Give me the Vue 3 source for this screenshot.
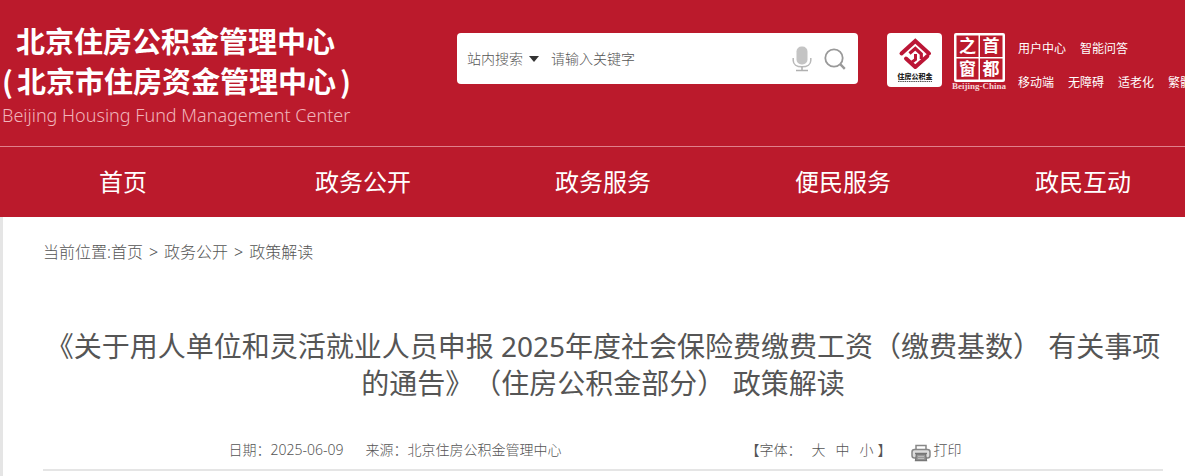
<script setup>
import { ref } from 'vue'

const keyword = ref('')
const scope = ref('站内搜索')
const topLinks = [
  ['用户中心', '智能问答'],
  ['移动端', '无障碍', '适老化', '繁體版'],
]
const navItems = ['首页', '政务公开', '政务服务', '便民服务', '政民互动']
const crumbs = ['首页', '政务公开', '政策解读']
const sizes = ['大', '中', '小']
</script>

<template>
  <div class="page">
    <header class="header">
      <div class="top">
        <a href="#" class="brand">
          <span class="brand-cn">北京住房公积金管理中心</span>
          <span class="brand-cn alias"><span>(</span><span>北京市住房资金管理中心</span><span>)</span></span>
          <span class="brand-en">Beijing Housing Fund Management Center</span>
        </a>

        <form class="search" @submit.prevent>
          <label class="scope">
            <select v-model="scope" aria-label="搜索范围">
              <option>站内搜索</option>
            </select>
            <svg class="caret" width="10" height="6" viewBox="0 0 10 6"><path d="M0 0h10L5 6z" fill="#333" /></svg>
          </label>
          <input v-model="keyword" type="text" placeholder="请输入关键字" aria-label="关键字" />
          <button type="button" aria-label="语音输入">
            <svg width="20" height="26" viewBox="0 0 20 26">
              <rect x="4.5" y="0.5" width="11" height="18" rx="5" fill="#c4c4c4" />
              <path d="M1.2 12v2.5c0 3.800 3.400 6.300 8.800 6.300s8.800-2.500 8.800-6.300V12" fill="none" stroke="#b9b9b9" stroke-width="1.500" />
              <path d="M10 20.500v3.500M4 24.500h12" fill="none" stroke="#b0b0b0" stroke-width="1.500" />
            </svg>
          </button>
          <button type="submit" aria-label="搜索">
            <svg width="22" height="22" viewBox="0 0 22 22" fill="none" stroke="#999">
              <circle cx="10" cy="10" r="8.700" stroke-width="1.800" />
              <path d="M16.200 16.200l4.600 4.600" stroke-width="2.400" />
            </svg>
          </button>
        </form>

        <div class="logos">
          <a href="#" aria-label="住房公积金">
            <svg width="55" height="54" viewBox="0 0 55 54">
              <rect width="55" height="54" rx="4" fill="#fff" />
              <g fill="none" stroke="#bb1636" stroke-width="4" stroke-linecap="round">
                <path d="M14.500 20.500L28.300 8l13.700 12.500" />
                <path d="M19 25.500l9.300 8.500 12-10.800" stroke-linejoin="round" />
                <path d="M22.500 20.500l5.800-5 6 5.500v5" stroke-width="3.200" stroke-linecap="butt" />
                <path d="M28.500 21v5.500l-3.500 2.500" stroke-width="3" stroke-linecap="butt" />
              </g>
              <text class="seal-name" x="28" y="46" text-anchor="middle">住房公积金</text>
              <path d="M11 48.500h34" stroke="#555" stroke-width="1.200" stroke-dasharray="1.500 .7" />
            </svg>
          </a>
          <a href="#" aria-label="首都之窗">
            <svg width="58" height="58" viewBox="0 0 58 58">
              <rect x="4" y="0" width="51" height="49" rx="2" fill="#fff" />
              <path d="M6.500 2.500h22v21.500h-22zM30 2.500h22.500v21.500H30zM6.500 25.500h22v21h-22zM30 25.500h22.500v21H30z" fill="#bb1a2c" />
              <g class="capital" text-anchor="middle">
                <text x="17.500" y="19">之</text>
                <text x="41" y="19">首</text>
                <text x="17.500" y="42">窗</text>
                <text x="41" y="42">都</text>
              </g>
              <text class="domain" x="29" y="56" text-anchor="middle">Beijing-China</text>
            </svg>
          </a>
        </div>

        <div class="links">
          <div v-for="(row, i) in topLinks" :key="i" class="link-row">
            <a v-for="link in row" :key="link" href="#">{{ link }}</a>
          </div>
        </div>
      </div>

      <nav class="nav">
        <a v-for="item in navItems" :key="item" href="#">{{ item }}</a>
      </nav>
    </header>

    <main class="content">
      <div class="crumbs">
        <span>当前位置:</span>
        <template v-for="(c, i) in crumbs" :key="c">
          <span v-if="i" class="sep">&gt;</span>
          <a href="#">{{ c }}</a>
        </template>
      </div>

      <h1>《关于用人单位和灵活就业人员申报 2025年度社会保险费缴费工资（缴费基数） 有关事项的通告》（住房公积金部分） 政策解读</h1>

      <div class="meta">
        <div class="info">
          <span>日期：2025-06-09</span>
          <span>来源：北京住房公积金管理中心</span>
        </div>
        <div class="tools">
          <div class="sizes">
            <span>【字体：</span>
            <button v-for="s in sizes" :key="s" type="button">{{ s }}</button>
            <span>】</span>
          </div>
          <button type="button" class="print">
            <svg width="20" height="18" viewBox="0 0 20 18">
              <path d="M5 6V1.500h10V6" fill="#fff" stroke="#888" stroke-width="1.500" />
              <rect x="1" y="5.500" width="18" height="8.500" rx="2.500" fill="#ddd" stroke="#888" stroke-width="1.500" />
              <path d="M4 9.500h12" stroke="#777" stroke-width="1.500" />
              <path d="M5.500 10h9l1 6.500h-11z" fill="#999" stroke="#777" stroke-width="1.300" />
              <path d="M7 12.500h6M7 14.500h6" stroke="#bbb" />
            </svg>
            打印
          </button>
        </div>
      </div>
    </main>
  </div>
</template>

<style>
body {
  background: #fff;
}
</style>

<style scoped>
.page {
  overflow: hidden;
  font-family: "Noto Sans", "Noto Sans CJK SC", sans-serif;
  color: #555;
  text-spacing-trim: space-all;
}
a {
  color: inherit;
  text-decoration: none;
}
button,
input,
select {
  border: 0;
  padding: 0;
  margin: 0;
  background: none;
  font: inherit;
  color: inherit;
}
.header {
  background: #bb1a2c;
  color: #fff;
}
.top {
  display: flex;
  align-items: flex-start;
  height: 146px;
  border-bottom: 1px solid #e0808b;
}
.brand {
  display: flex;
  flex-direction: column;
  flex: 0 0 auto;
  width: 351px;
  padding: 20px 0 0 2px;
}
.brand-cn {
  padding-left: 14px;
  font-family: "Noto Sans CJK SC", sans-serif;
  font-size: 29px;
  font-weight: 700;
  line-height: 40px;
  white-space: nowrap;
}
.brand-cn.alias {
  display: flex;
  gap: 4px;
  padding-left: 0;
}
.brand-en {
  font-size: 18px;
  font-weight: 300;
  line-height: 30px;
  white-space: nowrap;
  color: #f0b4bb;
}
.search {
  display: flex;
  align-items: center;
  flex: 1 1 auto;
  gap: 12px;
  height: 51px;
  margin: 33px 0 0 104px;
  padding: 0 12px 0 10px;
  box-sizing: border-box;
  border-radius: 4px;
  background: #fff;
  color: #555;
  font-size: 14px;
  font-weight: 300;
}
.scope {
  display: flex;
  align-items: center;
  gap: 6px;
}
.scope select {
  appearance: none;
}
.search input {
  flex: 1 1 0;
  min-width: 0;
  outline: 0;
}
.search input::placeholder {
  color: #555;
  opacity: 1;
}
.search button,
.logos a {
  display: flex;
}
.logos {
  display: flex;
  gap: 8px;
  margin: 33px 0 0 29px;
}
.links {
  display: flex;
  flex-direction: column;
  flex: 0 0 auto;
  gap: 14px;
  width: 167px;
  margin: 39px 0 0 10px;
  font-size: 12px;
  line-height: 20px;
}
.link-row {
  display: flex;
  gap: 14px;
  white-space: nowrap;
}
.seal-name {
  font: 900 7px "Noto Sans CJK SC", sans-serif;
  fill: #222;
}
.capital {
  font: 700 17px "Noto Sans CJK SC", sans-serif;
  fill: #fff;
}
.domain {
  font: 700 9px "Liberation Serif", serif;
  fill: #f6d5d8;
}
.nav {
  display: grid;
  grid-template-columns: repeat(5, 1fr);
  margin: 0 -18px 0 3px;
  font-size: 24px;
  line-height: 70px;
  text-align: center;
}
.content {
  padding: 20px 22px 6px 40px;
  border-left: 3px solid #e5e5e5;
}
.crumbs {
  display: flex;
  font-size: 16px;
  font-weight: 300;
  line-height: 30px;
}
.sep {
  padding: 0 6px;
}
h1 {
  margin: 61px 0 0;
  font-size: 28px;
  font-weight: 400;
  line-height: 37px;
  text-align: center;
}
.meta {
  display: flex;
  justify-content: center;
  gap: 184px;
  margin-top: 38px;
  padding: 0 16px 9px 0;
  border-bottom: 2px solid #e5e5e5;
  font-size: 14px;
  font-weight: 300;
  line-height: 20px;
}
.info {
  display: flex;
  gap: 22px;
}
.tools {
  display: flex;
  gap: 20px;
}
.sizes {
  display: flex;
  gap: 10px;
}
.sizes button,
.print {
  height: 20px;
  line-height: 20px;
}
.sizes span:last-child {
  margin-left: -6px;
}
.print {
  display: flex;
  gap: 2px;
}
.print svg {
  margin-top: 4px;
}
</style>
